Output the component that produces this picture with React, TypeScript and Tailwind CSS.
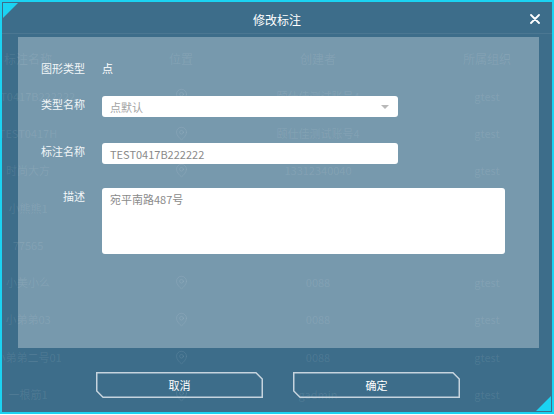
import { MapPin } from "lucide-react";

const rows = [
  { name: "TEST0417B222222", creator: "颐仕佳测试账号4", org: "gtest" },
  { name: "TEST0417H", creator: "颐仕佳测试账号4", org: "gtest" },
  { name: "时尚大方", creator: "13312340040", org: "gtest" },
  { name: "小熊熊1", creator: "0068", org: "gtest" },
  { name: "77565", creator: "0068", org: "gtest" },
  { name: "小美小么", creator: "0088", org: "gtest" },
  { name: "小弟弟03", creator: "0088", org: "gtest" },
  { name: "小弟弟二号01", creator: "0088", org: "gtest" },
  { name: "一根筋1", creator: "gadmin", org: "gtest" },
];

function ChamferButton({ label }: { label: string }) {
  return (
    <button className="relative w-[167px] h-[26px] flex items-center justify-center text-[11px] text-white">
      <svg className="absolute inset-0" width="167" height="26" viewBox="0 0 167 26">
        <path
          d="M0.75 0.75 H160 L166.25 7 V25.25 H7 L0.75 19 Z"
          fill="none"
          stroke="#c6d4de"
          strokeWidth="1.5"
        />
      </svg>
      <span className="relative">{label}</span>
    </button>
  );
}

function Label({ children }: { children: string }) {
  return (
    <div className="w-[67px] shrink-0 text-right text-[11px] leading-[14px] text-[#f2f6f8]">{children}</div>
  );
}

export default function App() {
  return (
    <div className="w-[554px] h-[415px] bg-white font-['Noto_Sans_CJK_SC','Noto_Sans',sans-serif]">
      <div className="relative w-[554px] h-[414px] border-2 border-[#1bd3f2] bg-[#3d6d8a] overflow-hidden">
        {/* list page underneath the dialog */}
        <div className="ml-[-42px] pt-[38px] text-white/[0.09]">
          <div className="flex h-[37.3px] items-center text-[12px]">
            <div className="w-[136px] shrink-0 text-center">标注名称</div>
            <div className="w-[170px] shrink-0 text-center">位置</div>
            <div className="w-[104px] shrink-0 text-center">创建者</div>
            <div className="w-[234px] shrink-0 text-center">所属组织</div>
          </div>
          {rows.map((r, i) => (
            <div key={i} className="flex h-[37.3px] items-center text-[11px]">
              <div className="w-[136px] shrink-0 text-center whitespace-nowrap">{r.name}</div>
              <div className="w-[170px] shrink-0 flex justify-center">
                <MapPin size={15} strokeWidth={1.5} />
              </div>
              <div className="w-[104px] shrink-0 text-center whitespace-nowrap">{r.creator}</div>
              <div className="w-[234px] shrink-0 text-center">{r.org}</div>
            </div>
          ))}
        </div>

        {/* dialog */}
        <div className="absolute inset-0 flex flex-col">
          <div className="absolute left-[1px] top-[1px] w-0 h-0 border-t-[15px] border-r-[15px] border-t-[#1bd3f2] border-r-transparent" />
          <div className="absolute right-[1px] bottom-[1px] w-0 h-0 border-b-[15px] border-l-[15px] border-b-[#1bd3f2] border-l-transparent" />

          <div className="relative h-[32px] shrink-0 border-b border-white/[0.07] flex items-center justify-center pt-[4px]">
            <span className="text-[12px] text-white">修改标注</span>
            <svg className="absolute right-[12px] top-[12px]" width="10" height="10" viewBox="0 0 10 10">
              <path d="M1 1 L9 9 M9 1 L1 9" stroke="#fff" strokeWidth="1.8" strokeLinecap="round" />
            </svg>
          </div>

          <div className="ml-[16px] mr-[13px] mt-[3px] h-[311px] shrink-0 bg-white/30 pt-[24px]">
            <div className="flex items-start">
              <Label>图形类型</Label>
              <div className="ml-[17px] text-[11px] leading-[14px] text-white">点</div>
            </div>

            <div className="flex items-start mt-[21px]">
              <div className="mt-[1px]">
                <Label>类型名称</Label>
              </div>
              <div className="ml-[17px] w-[296px] h-[21px] rounded-[3px] bg-white flex items-center justify-between pl-[8px] pr-[9px]">
                <span className="text-[11px] leading-[14px] text-[#a3a3a3]">点默认</span>
                <div className="w-0 h-0 border-l-[4px] border-r-[4px] border-t-[4px] border-l-transparent border-r-transparent border-t-[#b9b9b9]" />
              </div>
            </div>

            <div className="flex items-start mt-[26px]">
              <div className="mt-[1px]">
                <Label>标注名称</Label>
              </div>
              <div className="ml-[17px] w-[296px] h-[21px] rounded-[3px] bg-white flex items-center pl-[8px]">
                <span className="text-[11px] leading-[14px] text-[#8a8a8a]">TEST0417B222222</span>
              </div>
            </div>

            <div className="flex items-start mt-[24px]">
              <div className="mt-[1px]">
                <Label>描述</Label>
              </div>
              <div className="ml-[17px] w-[403px] h-[66px] rounded-[3px] bg-white pl-[8px] pt-[4px] text-[11px] leading-[14px] text-[#8a8a8a]">
                宛平南路487号
              </div>
            </div>
          </div>

          <div className="flex justify-center gap-[30px] mt-[24px] pl-[2px]">
            <ChamferButton label="取消" />
            <ChamferButton label="确定" />
          </div>
        </div>
      </div>
    </div>
  );
}
